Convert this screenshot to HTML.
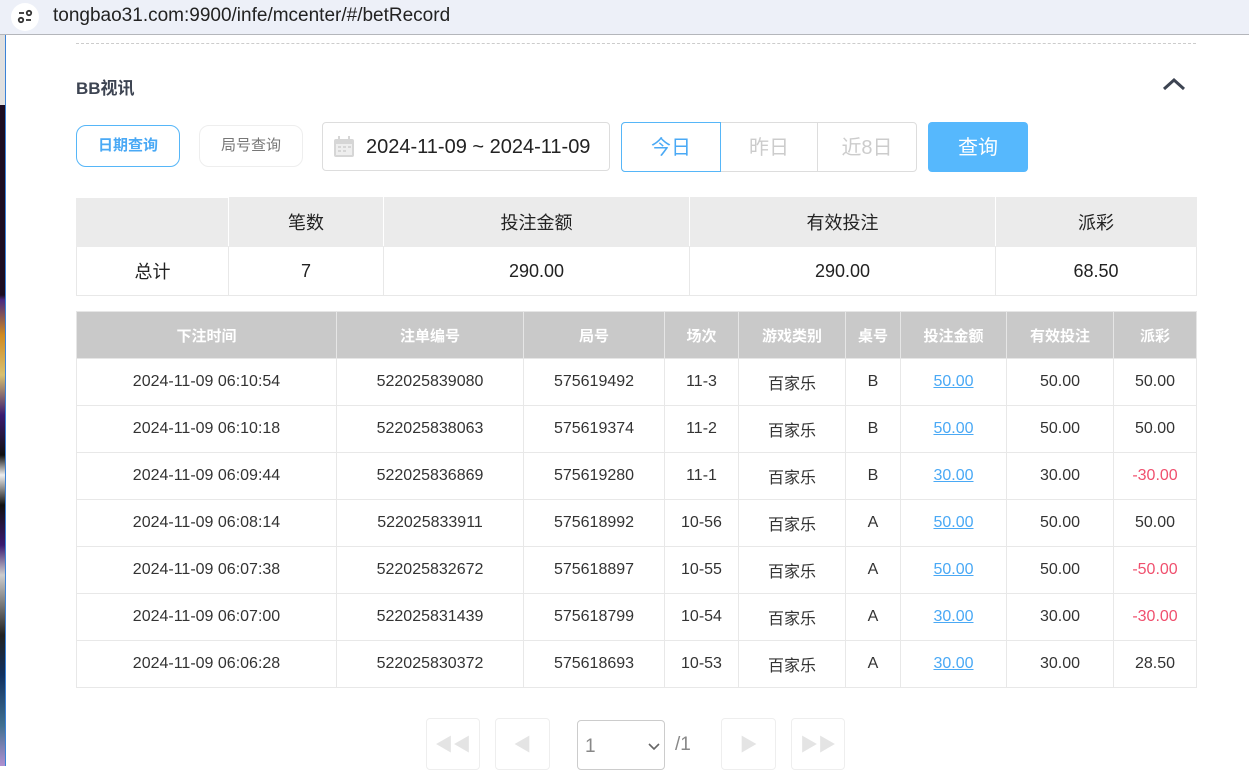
<!DOCTYPE html>
<html><head><meta charset="utf-8"><style>
*{box-sizing:border-box;margin:0;padding:0}
body{width:1249px;height:766px;overflow:hidden;background:#fff;font-family:"Liberation Sans","Noto Sans CJK SC",sans-serif;position:relative;color:#333}
.bar{position:absolute;left:0;top:0;width:1249px;height:35px;background:#edf0f8;border-bottom:1px solid #b4b6bb}
.url{position:absolute;left:53px;top:5px;font-size:19px;color:#222}
.ic{position:absolute;left:11px;top:3px;width:28px;height:28px;border-radius:50%;background:#fff}
.strip{position:absolute;left:0;top:35px;width:5px;height:731px;background:linear-gradient(#e0e0e0 0,#e0e0e0 70px,#1b0d22 70px,#1b0d22 260px,#4a2a80 265px,#d08a20 300px,#d8c070 340px,#3a1a70 380px,#111 420px,#eee 440px,#111 470px,#3a1a70 510px,#ccc 540px,#222 600px,#103060 640px,#407090 690px,#b090d0 731px)}
.vline{position:absolute;left:5px;top:35px;width:1px;height:731px;background:#3b82d6}
.dash{position:absolute;left:76px;top:43px;width:1120px;border-top:1px dashed #ccc}
.t{position:absolute;left:76px;top:74px;font-size:17px;font-weight:bold;color:#3d4452}
.btn{position:absolute;border-radius:10px;font-size:15px;text-align:center}
table{position:absolute;border-collapse:collapse;table-layout:fixed}
td,th{border:1px solid #e8e8e8;text-align:center}
.sum td{height:49px;font-size:18px;color:#222}
.det th{background:#c9c9c9;color:#fff;font-size:15px;height:47px;border-color:#e6e6e6}
.det td{height:47px;font-size:16px;color:#333}
a{color:#4aa9f5;text-decoration:underline}
.det td.neg{color:#f0506e}
.pg{position:absolute;top:718px;width:54px;height:52px;border:1px solid #eee;border-radius:4px;color:#e4e4e4;font-size:18px;text-align:center;line-height:52px}
</style></head><body>
<div class="bar"><div class="ic"><svg width="28" height="28"><g stroke="#333" stroke-width="1.8" fill="none"><line x1="8" y1="10" x2="13" y2="10"/><circle cx="18" cy="10" r="2.2"/><circle cx="10" cy="17" r="2.2"/><line x1="15" y1="17" x2="20" y2="17"/></g></svg></div><div class="url">tongbao31.com:9900/infe/mcenter/#/betRecord</div></div>
<div class="strip"></div><div class="vline"></div>
<div class="dash"></div>
<div class="t">BB视讯</div>
<svg style="position:absolute;left:1162px;top:76px" width="24" height="16"><polyline points="2,13 12,4 22,13" stroke="#3d4452" stroke-width="3" fill="none"/></svg>
<div class="btn" style="left:76px;top:125px;width:104px;height:42px;border:1px solid #56b6f8;color:#4aa9f5;font-weight:bold;line-height:40px">日期查询</div>
<div class="btn" style="left:199px;top:125px;width:104px;height:42px;border:1px solid #eee;color:#777;line-height:40px">局号查询</div>
<div style="position:absolute;left:322px;top:122px;width:288px;height:49px;border:1px solid #ddd;border-radius:4px;font-size:20px;color:#222;line-height:49px;padding-left:43px;white-space:nowrap">2024-11-09 ~ 2024-11-09
<svg style="position:absolute;left:10px;top:13px" width="22" height="22"><rect x="1" y="3" width="20" height="18" rx="2" fill="#d6d6d6"/><rect x="3" y="8" width="16" height="11" fill="#eee"/><g fill="#d6d6d6"><rect x="5" y="10" width="3" height="2"/><rect x="10" y="10" width="3" height="2"/><rect x="15" y="10" width="3" height="2"/><rect x="5" y="14" width="3" height="2"/><rect x="10" y="14" width="3" height="2"/></g><rect x="5" y="0" width="2" height="5" fill="#d6d6d6"/><rect x="15" y="0" width="2" height="5" fill="#d6d6d6"/></svg></div>
<div style="position:absolute;left:621px;top:122px;width:296px;height:50px;border:1px solid #ddd;border-radius:4px"></div>
<div style="position:absolute;left:621px;top:122px;width:100px;height:50px;border:1px solid #56b6f8;border-radius:4px 0 0 4px;color:#4aa9f5;font-size:20px;text-align:center;line-height:50px">今日</div>
<div style="position:absolute;left:721px;top:123px;width:97px;height:48px;border-right:1px solid #ddd;color:#ccc;font-size:20px;text-align:center;line-height:50px">昨日</div>
<div style="position:absolute;left:818px;top:123px;width:98px;height:48px;color:#ccc;font-size:20px;text-align:center;line-height:50px">近8日</div>
<div style="position:absolute;left:928px;top:122px;width:100px;height:50px;background:#56b8fd;border-radius:4px;color:#fff;font-size:20px;text-align:center;line-height:52px">查询</div>
<table class="sum" style="left:76px;top:197px;width:1120px">
<colgroup><col style="width:152px"><col style="width:155px"><col style="width:306px"><col style="width:306px"><col style="width:201px"></colgroup>
<tr style="background:#ebebeb"><td style="border-color:#fff #fff #ebebeb #ebebeb">&nbsp;</td><td style="border-color:#ebebeb #fff">笔数</td><td style="border-color:#ebebeb #fff">投注金额</td><td style="border-color:#ebebeb #fff">有效投注</td><td style="border-color:#ebebeb">派彩</td></tr>
<tr><td>总计</td><td>7</td><td>290.00</td><td>290.00</td><td>68.50</td></tr></table>
<table class="det" style="left:76px;top:311px;width:1120px">
<colgroup><col style="width:260px"><col style="width:187px"><col style="width:141px"><col style="width:74px"><col style="width:107px"><col style="width:55px"><col style="width:106px"><col style="width:107px"><col style="width:83px"></colgroup>
<tr><th>下注时间</th><th>注单编号</th><th>局号</th><th>场次</th><th>游戏类别</th><th>桌号</th><th>投注金额</th><th>有效投注</th><th>派彩</th></tr>
<tr><td>2024-11-09 06:10:54</td><td>522025839080</td><td>575619492</td><td>11-3</td><td>百家乐</td><td>B</td><td><a>50.00</a></td><td>50.00</td><td>50.00</td></tr>
<tr><td>2024-11-09 06:10:18</td><td>522025838063</td><td>575619374</td><td>11-2</td><td>百家乐</td><td>B</td><td><a>50.00</a></td><td>50.00</td><td>50.00</td></tr>
<tr><td>2024-11-09 06:09:44</td><td>522025836869</td><td>575619280</td><td>11-1</td><td>百家乐</td><td>B</td><td><a>30.00</a></td><td>30.00</td><td class="neg">-30.00</td></tr>
<tr><td>2024-11-09 06:08:14</td><td>522025833911</td><td>575618992</td><td>10-56</td><td>百家乐</td><td>A</td><td><a>50.00</a></td><td>50.00</td><td>50.00</td></tr>
<tr><td>2024-11-09 06:07:38</td><td>522025832672</td><td>575618897</td><td>10-55</td><td>百家乐</td><td>A</td><td><a>50.00</a></td><td>50.00</td><td class="neg">-50.00</td></tr>
<tr><td>2024-11-09 06:07:00</td><td>522025831439</td><td>575618799</td><td>10-54</td><td>百家乐</td><td>A</td><td><a>30.00</a></td><td>30.00</td><td class="neg">-30.00</td></tr>
<tr><td>2024-11-09 06:06:28</td><td>522025830372</td><td>575618693</td><td>10-53</td><td>百家乐</td><td>A</td><td><a>30.00</a></td><td>30.00</td><td>28.50</td></tr>
</table>
<div class="pg" style="left:426px">◀◀</div>
<div class="pg" style="left:495px;width:55px">◀</div>
<div style="position:absolute;left:577px;top:720px;width:88px;height:50px;border:1px solid #ccc;border-radius:4px;font-size:19px;color:#888;line-height:52px;padding-left:7px">1<svg style="position:absolute;left:70px;top:22px" width="12" height="8"><polyline points="1,1 6,6 11,1" stroke="#666" stroke-width="1.6" fill="none"/></svg></div>
<div style="position:absolute;left:675px;top:734px;font-size:19px;color:#888">/1</div>
<div class="pg" style="left:721px;width:55px">▶</div>
<div class="pg" style="left:791px">▶▶</div>
</body></html>
